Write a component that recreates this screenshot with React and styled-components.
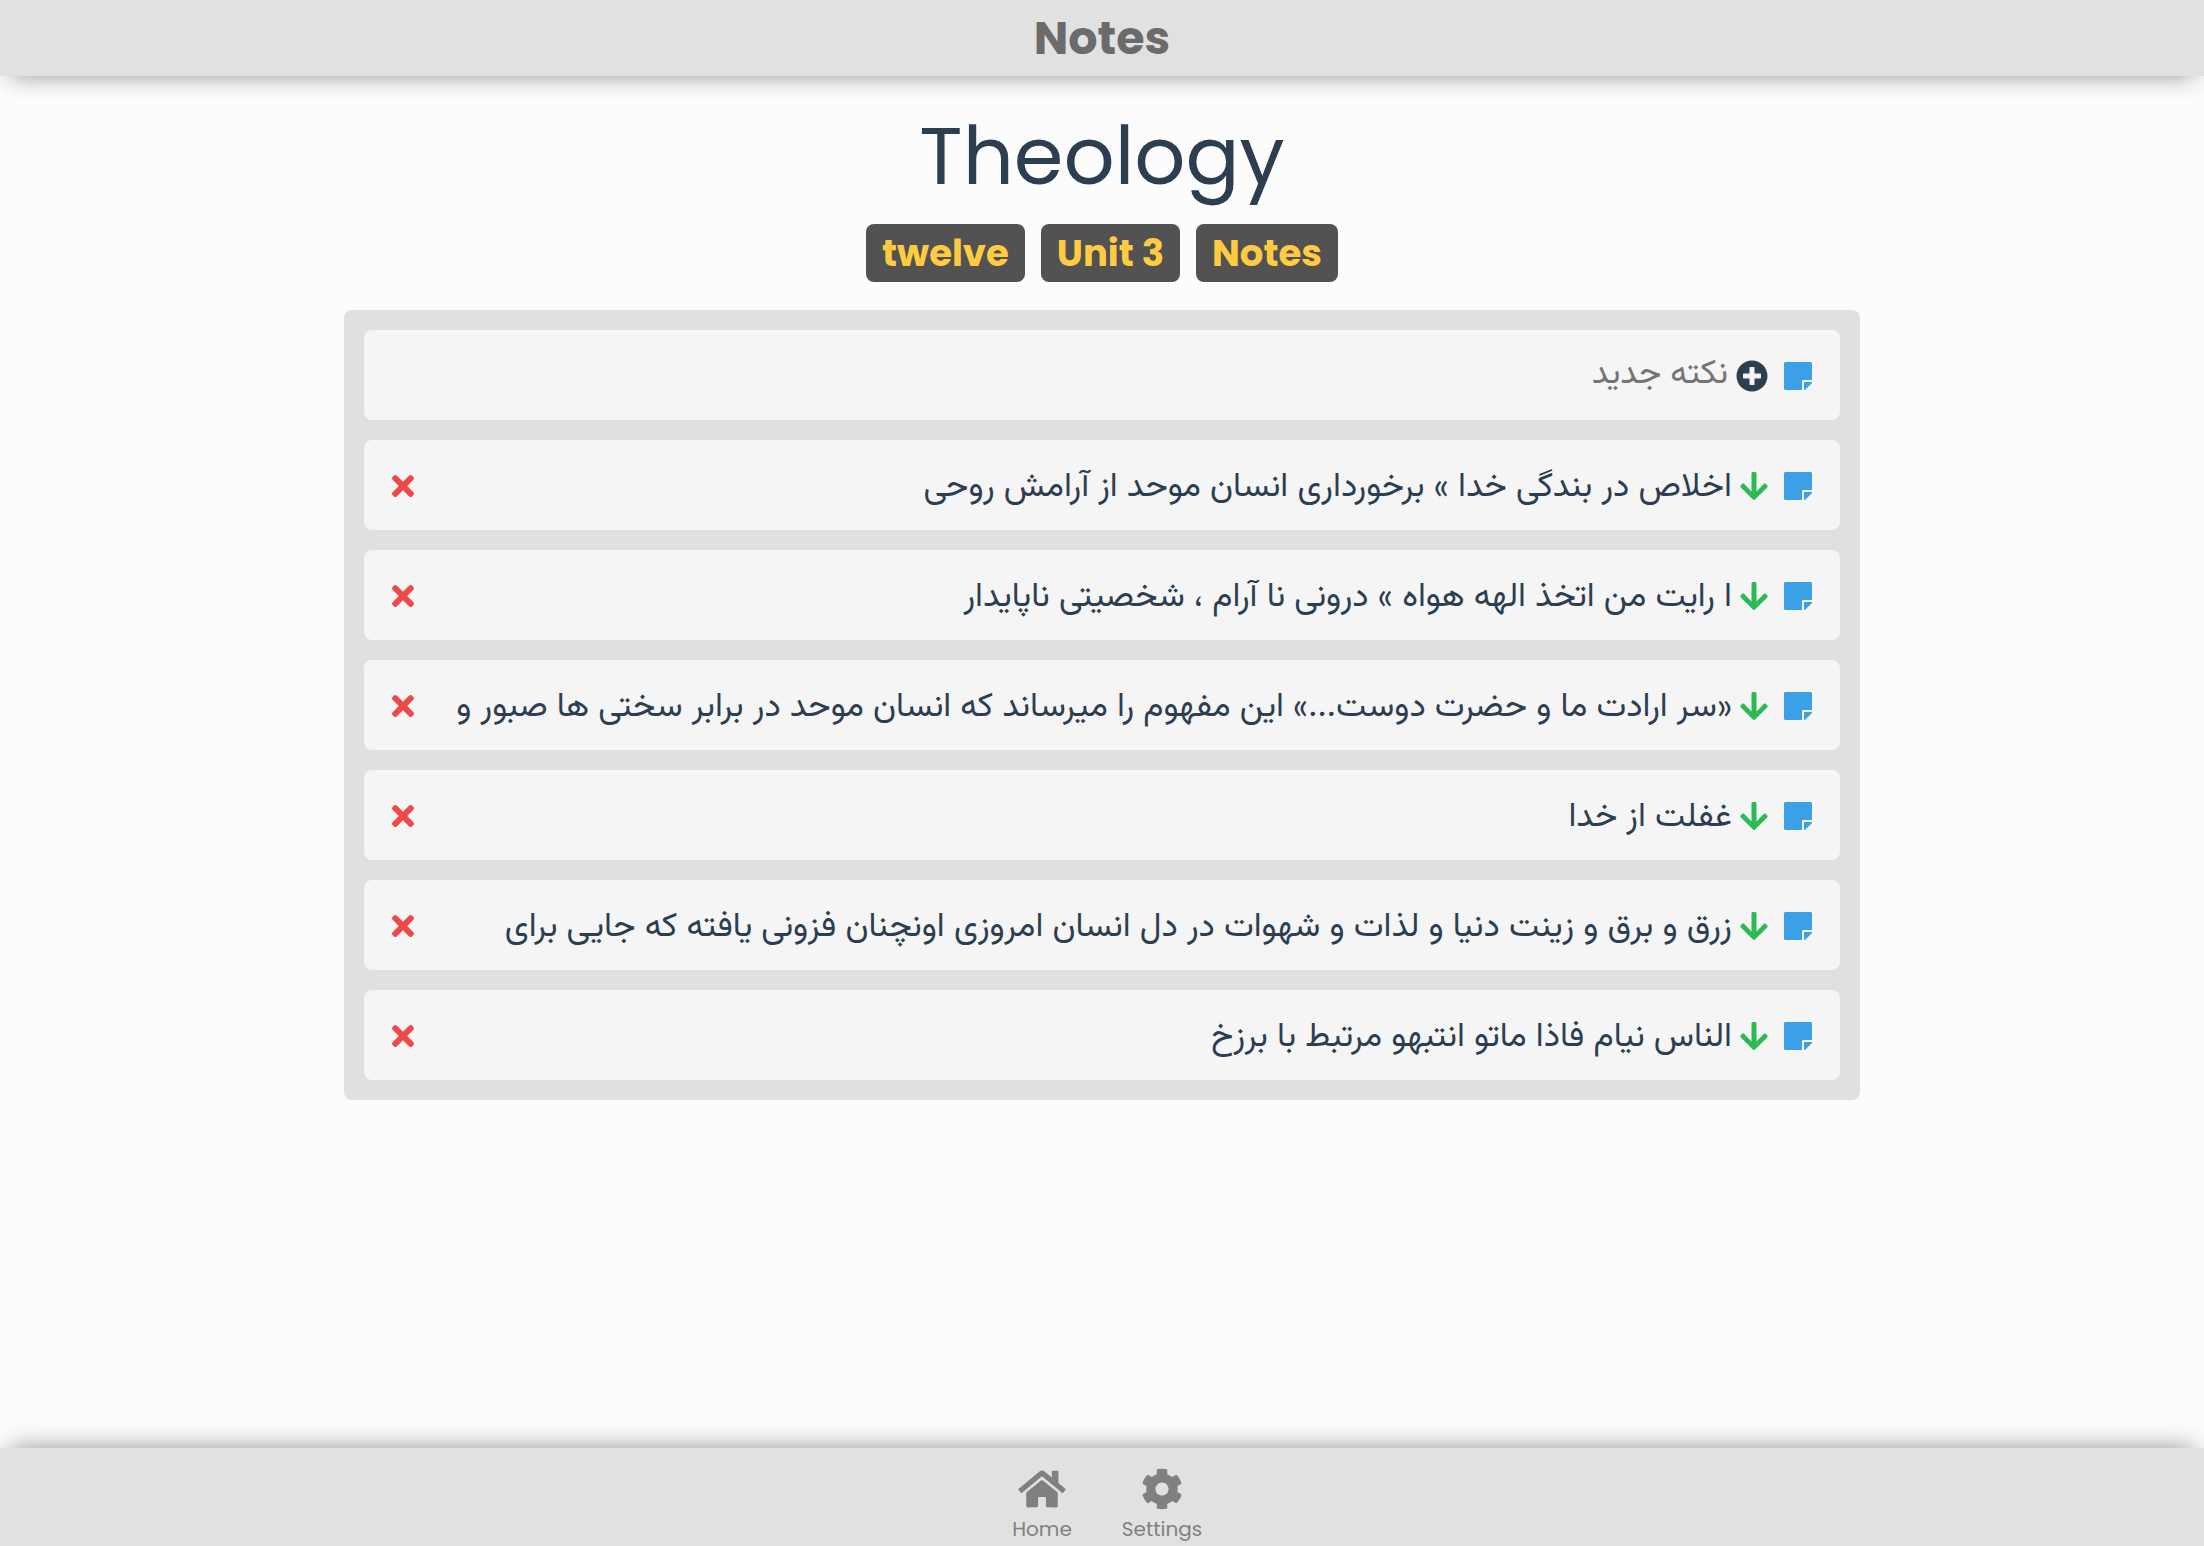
import React, { useState } from "react";
import styled, { createGlobalStyle } from "styled-components";
import {
  FaArrowDown,
  FaCog,
  FaHome,
  FaPlusCircle,
  FaStickyNote,
  FaTimes,
} from "react-icons/fa";

const GlobalStyle = createGlobalStyle`
  *, *::before, *::after { box-sizing: border-box; }
  body {
    margin: 0;
    background: #fcfcfc;
    color: #2c3e50;
    font-family: Poppins, Inter, "DejaVu Sans", sans-serif;
  }
`;

const Page = styled.div`
  min-height: 100vh;
  display: flex;
  flex-direction: column;
`;

const Header = styled.header`
  height: 76px;
  display: flex;
  align-items: center;
  justify-content: center;
  background: #e1e1e1;
  box-shadow: 0 10px 24px -10px rgba(0, 0, 0, 0.42);
  color: #6b6b6b;
  font-size: 46px;
  font-weight: 700;
  line-height: 76px;
`;

const Main = styled.main`
  flex: 1;
  display: flex;
  flex-direction: column;
  align-items: center;
  padding: 28px 20px 40px;
`;

const Title = styled.h1`
  margin: 0;
  font-size: 80px;
  font-weight: 400;
  line-height: 104px;
`;

const Tags = styled.ul`
  list-style: none;
  margin: 16px 0 28px;
  padding: 0;
  display: flex;
  gap: 16px;
`;

const Tag = styled.li`
  padding: 0 16px;
  border-radius: 8px;
  background: #525252;
  color: #ffcb43;
  font-size: 37px;
  font-weight: 700;
  line-height: 58px;
`;

const Panel = styled.ul`
  list-style: none;
  margin: 0;
  width: 100%;
  max-width: 1516px;
  padding: 20px;
  border-radius: 8px;
  background: #e0e0e0;
  display: flex;
  flex-direction: column;
  gap: 20px;
`;

const Card = styled.li`
  height: 90px;
  padding: 2px 28px 0;
  border-radius: 8px;
  background: #f5f5f5;
  display: flex;
  align-items: center;
  font-family: Vazirmatn, Vazir, "DejaVu Sans", sans-serif;
  font-size: 34px;
`;

const NoteIcon = styled(FaStickyNote)`
  flex: none;
  width: 28px;
  height: 32px;
  margin-inline-end: 16px;
  color: #3ca0e7;
`;

const IconButton = styled.button`
  flex: none;
  display: flex;
  padding: 0;
  border: 0;
  background: none;
  color: ${(p) => p.$color};
  font-size: 32px;
  cursor: pointer;

  svg {
    width: ${(p) => p.$width};
    height: 32px;
  }
`;

const NoteText = styled.span`
  flex: 1;
  min-width: 0;
  margin: 0 8px;
  padding-top: 4px;
  overflow: hidden;
  white-space: nowrap;
  line-height: 60px;
`;

const NoteInput = styled.input`
  flex: 1;
  min-width: 0;
  margin: 0 8px;
  padding: 0 0 2px;
  border: 0;
  outline: 0;
  background: none;
  color: inherit;
  font: inherit;
  line-height: 48px;

  &::placeholder {
    color: #757575;
  }
`;

const Footer = styled.footer`
  height: 98px;
  background: #e1e1e1;
  box-shadow: 0 -10px 24px -10px rgba(0, 0, 0, 0.42);
`;

const Nav = styled.nav`
  display: flex;
  justify-content: center;
  padding-top: 20px;
`;

const NavLink = styled.a`
  width: 120px;
  display: flex;
  flex-direction: column;
  align-items: center;
  color: #808080;
  font-size: 20px;
  line-height: 30px;
  text-decoration: none;

  svg {
    width: 48px;
    height: 42px;
    margin-bottom: 4px;
  }
`;

const TAGS = ["twelve", "Unit 3", "Notes"];

const NOTES = [
  "اخلاص در بندگی خدا » برخورداری انسان موحد از آرامش روحی",
  "ا رایت من اتخذ الهه هواه » درونی نا آرام ، شخصیتی ناپایدار",
  "«سر ارادت ما و حضرت دوست...» این مفهوم را میرساند که انسان موحد در برابر سختی ها صبور و",
  "غفلت از خدا",
  "زرق و برق و زینت دنیا و لذات و شهوات در دل انسان امروزی اونچنان فزونی یافته که جایی برای",
  "الناس نیام فاذا ماتو انتبهو مرتبط با برزخ",
];

export default function App() {
  const [draft, setDraft] = useState("");

  return (
    <Page>
      <GlobalStyle />
      <Header>Notes</Header>
      <Main>
        <Title>Theology</Title>
        <Tags>
          {TAGS.map((tag) => (
            <Tag key={tag}>{tag}</Tag>
          ))}
        </Tags>
        <Panel dir="rtl" lang="fa">
          <Card>
            <NoteIcon />
            <IconButton type="button" aria-label="نکته جدید" $color="#2c3e50" $width="32px">
              <FaPlusCircle />
            </IconButton>
            <NoteInput
              aria-label="نکته جدید"
              placeholder="نکته جدید"
              value={draft}
              onChange={(e) => setDraft(e.target.value)}
            />
          </Card>
          {NOTES.map((note) => (
            <Card key={note}>
              <NoteIcon />
              <IconButton type="button" aria-label="پایین" $color="#2dba55" $width="28px">
                <FaArrowDown />
              </IconButton>
              <NoteText>{note}</NoteText>
              <IconButton type="button" aria-label="حذف" $color="#ef4848" $width="22px">
                <FaTimes />
              </IconButton>
            </Card>
          ))}
        </Panel>
      </Main>
      <Footer>
        <Nav>
          <NavLink href="#home">
            <FaHome />
            Home
          </NavLink>
          <NavLink href="#settings">
            <FaCog />
            Settings
          </NavLink>
        </Nav>
      </Footer>
    </Page>
  );
}
